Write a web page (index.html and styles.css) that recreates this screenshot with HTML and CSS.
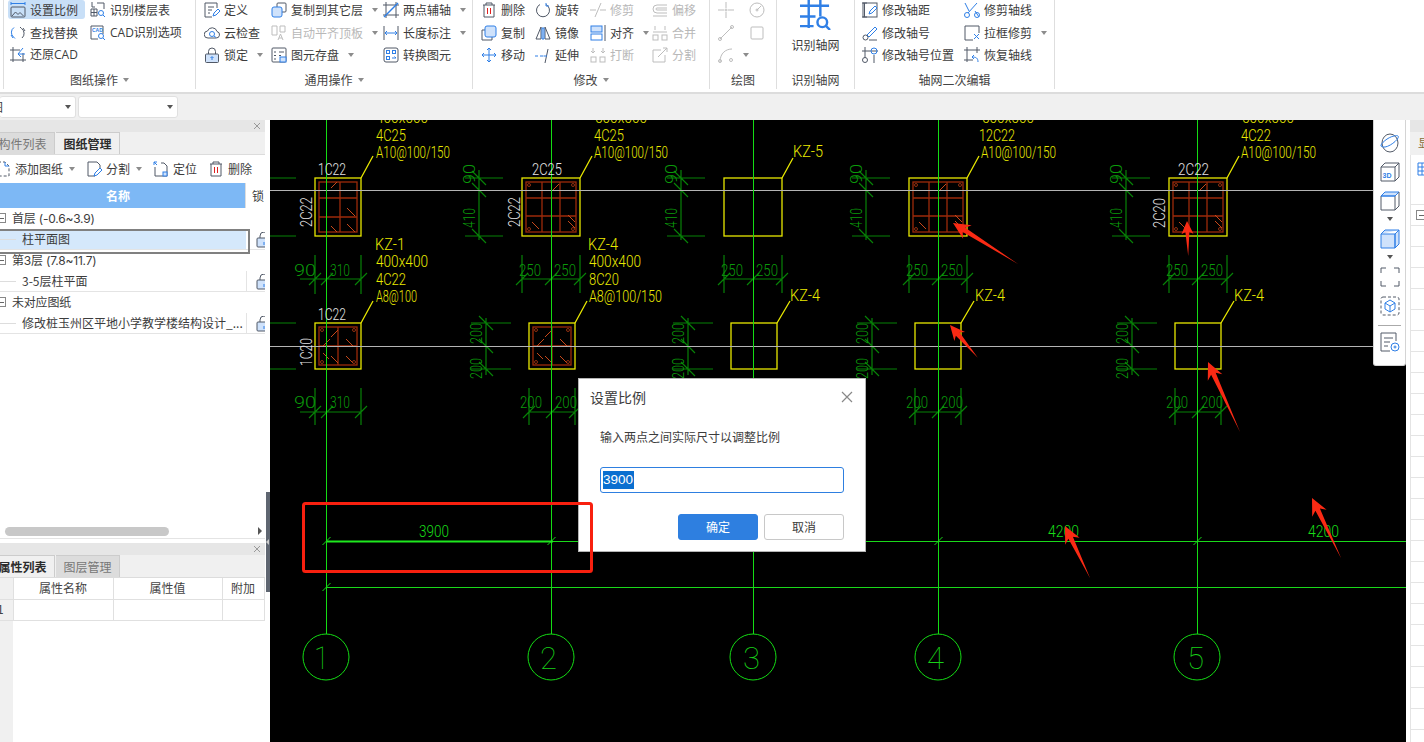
FILE: index.html
```html
<!DOCTYPE html>
<html lang="zh">
<head>
<meta charset="utf-8">
<title>设置比例</title>
<link rel="stylesheet" href="styles.css">
</head>
<body>
<header class="ribbon">
  <section class="group g1">
    <div class="tools">
      <div class="tool sel"><svg class="ic" viewBox="0 0 16 16"><path class="bl" d="M1 0v3M15 0v3M1 1.500h14"/><rect x="1" y="5" width="14" height="10" rx="1"/><path d="M2 14l3.500-4 2.500 2.500 2-2 3.500 3.500"/></svg><span>设置比例</span></div>
      <div class="tool"><svg class="ic" viewBox="0 0 16 16"><path class="bl" d="M4 2.500A6 6 0 0 0 3.500 12l1.500 1.500M1 10l2 3"/><path d="M10 2l1.500 1.500A6 6 0 0 1 12 13M15 6l-2-3"/></svg><span>查找替换</span></div>
      <div class="tool"><svg class="ic" viewBox="0 0 16 16"><path d="M3 0v15M0 3h10M13 6v9M0 13h16"/><path class="bl" d="M13 1L8 7h7M8 7l3 3"/></svg><span class="lat">还原CAD</span></div>
      <div class="tool"><svg class="ic" viewBox="0 0 16 16"><path d="M2 0v5h3M1 7h6v7H1zM1 10.500h6M4 7v7M7 1h7v6"/><circle class="bl" cx="11" cy="11" r="2.500"/><path class="bl" d="M13 13l2 2"/></svg><span>识别楼层表</span></div>
      <div class="tool"><svg class="ic" viewBox="0 0 16 16"><path d="M13 9V1H1v13h7"/><text class="mini" x="2" y="7">CAD</text><circle class="bl" cx="11" cy="11" r="2.500"/><path class="bl" d="M13 13l2 2"/></svg><span class="lat">CAD识别选项</span></div>
    </div>
    <div class="glabel">图纸操作<i class="caret"></i></div>
  </section>
  <section class="group g2">
    <div class="tools">
      <div class="tool"><svg class="ic" viewBox="0 0 16 16"><path d="M13 6V1H1v14h7M4 5h6M4 8h4M4 11h2"/><path class="bl" d="M9 14l1-3 4-4 2 2-4 4z"/></svg><span>定义</span></div>
      <div class="tool"><svg class="ic" viewBox="0 0 16 16"><path d="M4 13a3.500 3.500 0 0 1-.5-7A5 5 0 0 1 13 6.500 3.300 3.300 0 0 1 12 13z"/><circle class="bl" cx="8" cy="9" r="2.500"/><path class="bl" d="M10 11l2 1.500"/></svg><span>云检查</span></div>
      <div class="tool"><svg class="ic" viewBox="0 0 16 16"><rect class="lt" x="1.500" y="7" width="13" height="8.500" rx="1"/><path d="M4.500 7V4.500a3.500 3.500 0 0 1 7 0V7"/><path class="bl" d="M8 13V10M6.500 11L8 9.500 9.500 11"/></svg><span>锁定</span><i class="caret"></i></div>
      <div class="tool"><svg class="ic" viewBox="0 0 16 16"><rect x="6" y="1" width="9" height="9" rx="1"/><rect class="lt bl" x="1" y="5" width="10" height="10" rx="2"/></svg><span>复制到其它层</span><i class="caret"></i></div>
      <div class="tool off"><svg class="ic" viewBox="0 0 16 16"><path d="M1 1h5v9H1zM9 1h5v6H9zM7 15l2.500-6 2.500 6M8 13h3"/></svg><span>自动平齐顶板</span><i class="caret"></i></div>
      <div class="tool"><svg class="ic" viewBox="0 0 16 16"><rect x="1" y="1" width="14" height="14" rx="1"/><path d="M3 5h2M8 5h5M8 8.500h2M3 8.500h2M3 12h2"/><rect class="lt bl" x="9" y="10" width="6" height="5"/></svg><span>图元存盘</span><i class="caret"></i></div>
      <div class="tool"><svg class="ic" viewBox="0 0 16 16"><path d="M3 0v16M0 13h16M13 0v16M0 3h16"/><path class="bl thick" d="M1 15L15 1"/></svg><span>两点辅轴</span><i class="caret"></i></div>
      <div class="tool"><svg class="ic" viewBox="0 0 16 16"><path d="M1 1v14M15 1v14"/><path class="bl" d="M2 8h12M4 6L2 8l2 2M12 6l2 2-2 2"/></svg><span>长度标注</span><i class="caret"></i></div>
      <div class="tool"><svg class="ic" viewBox="0 0 16 16"><rect x="1" y="1" width="14" height="14" rx="2"/><rect class="bl" x="3.500" y="3.500" width="3" height="3"/><rect class="bl" x="9.500" y="3.500" width="3" height="3"/><rect class="bl" x="3.500" y="9.500" width="3" height="3"/><path class="bl" d="M9 11h4l-1.500-1.500"/></svg><span>转换图元</span></div>
    </div>
    <div class="glabel">通用操作<i class="caret"></i></div>
  </section>
  <section class="group g3">
    <div class="tools">
      <div class="tool"><svg class="ic" viewBox="0 0 16 16"><path d="M2 3h12M5 3V1h6v2M3 3v12h10V3"/><path class="rd" d="M6.500 6v6M9.500 6v6"/></svg><span>删除</span></div>
      <div class="tool"><svg class="ic" viewBox="0 0 16 16"><path d="M4 5H1v10h10v-3"/><rect class="lt bl" x="4" y="1" width="11" height="11" rx="2"/></svg><span>复制</span></div>
      <div class="tool"><svg class="ic" viewBox="0 0 16 16"><path class="bl" d="M8 1v14M1 8h14M6 3l2-2 2 2M6 13l2 2 2-2M3 6L1 8l2 2M13 6l2 2-2 2"/></svg><span>移动</span></div>
      <div class="tool"><svg class="ic" viewBox="0 0 16 16"><path d="M5 2.500a6.500 6.500 0 1 0 6 0"/><path class="bl" d="M11 1v3h3"/></svg><span>旋转</span></div>
      <div class="tool"><svg class="ic" viewBox="0 0 16 16"><path d="M6 2L1 14h5zM10 2l5 12h-5z"/><path class="lt bl" d="M7 3v11h2V3z"/></svg><span>镜像</span></div>
      <div class="tool"><svg class="ic" viewBox="0 0 16 16"><path class="bl" d="M0 9h3M5 9h3"/><path d="M13 2l-3 14"/><path class="bl" d="M8.500 9H12"/></svg><span>延伸</span></div>
      <div class="tool off"><svg class="ic" viewBox="0 0 16 16"><path d="M0 8h6M10 8h6M11 1L5 15"/></svg><span>修剪</span></div>
      <div class="tool"><svg class="ic" viewBox="0 0 16 16"><rect class="lt bl" x="1" y="1" width="11" height="6"/><rect class="bl" x="1" y="9" width="11" height="6"/><path d="M15 0v16"/></svg><span>对齐</span><i class="caret"></i></div>
      <div class="tool off"><svg class="ic" viewBox="0 0 16 16"><rect x="1" y="10" width="5" height="5"/><rect x="10" y="10" width="5" height="5"/><path d="M3 1v5M1 4l2 2 2-2M13 1v5M11 4l2 2 2-2"/></svg><span>打断</span></div>
      <div class="tool off"><svg class="ic" viewBox="0 0 16 16"><path d="M15 3H5a4 4 0 0 0 0 8h10M15 6H5a1 1 0 0 0 0 2h10M1 14h14"/></svg><span>偏移</span></div>
      <div class="tool off"><svg class="ic" viewBox="0 0 16 16"><rect x="1" y="10" width="5" height="5"/><rect x="10" y="10" width="5" height="5"/><path d="M3 1v4M13 1v4M1 7h14"/></svg><span>合并</span></div>
      <div class="tool off"><svg class="ic" viewBox="0 0 16 16"><path d="M9 3H1v12h12V8M6 10l9-9M11 1h4v4"/></svg><span>分割</span></div>
    </div>
    <div class="glabel">修改<i class="caret"></i></div>
  </section>
  <section class="group g4">
    <div class="tools">
      <div class="tool off"><svg class="ic" viewBox="0 0 16 16"><path d="M8 0v6M8 10v6M0 8h6M10 8h6"/><circle cx="8" cy="8" r="1"/></svg></div>
      <div class="tool off"><svg class="ic" viewBox="0 0 16 16"><path d="M2 14L14 2"/><circle cx="2" cy="14" r="1.500"/><circle cx="14" cy="2" r="1.500"/></svg></div>
      <div class="tool off"><svg class="ic" viewBox="0 0 16 16"><path d="M2 15C2 6 8 2 14 2"/><circle cx="2" cy="14" r="1.500"/><circle cx="13" cy="13" r="1.500"/></svg><i class="caret"></i></div>
      <div class="tool off"><svg class="ic" viewBox="0 0 16 16"><circle cx="8" cy="8" r="7"/><circle cx="8" cy="8" r="1"/><path d="M8 8l4-4"/></svg></div>
      <div class="tool off"><svg class="ic" viewBox="0 0 16 16"><rect x="2" y="2" width="12" height="12" rx="1"/></svg></div>
    </div>
    <div class="glabel">绘图</div>
  </section>
  <section class="group g5">
    <div class="big">
      <svg class="bigic" viewBox="0 0 32 32"><path d="M9 0v30M21 0v18M0 7h30M0 18h16M0 28h14"/><circle cx="23" cy="24" r="5"/><path d="M27 28l4 4"/></svg>
      <span>识别轴网</span>
    </div>
    <div class="glabel">识别轴网</div>
  </section>
  <section class="group g6">
    <div class="tools">
      <div class="tool"><svg class="ic" viewBox="0 0 16 16"><path d="M0 1h5M0 15h5M2.500 1v14"/><rect x="1" y="1" width="14" height="14"/><path class="bl" d="M7 12l1-3 5-5 2 2-5 5z"/></svg><span>修改轴距</span></div>
      <div class="tool"><svg class="ic" viewBox="0 0 16 16"><path class="bl" d="M5 10l8-8 2 2-8 8z"/><circle cx="3.500" cy="12.500" r="2.500"/><path d="M7 15h8"/></svg><span>修改轴号</span></div>
      <div class="tool"><svg class="ic" viewBox="0 0 16 16"><path d="M3 0v11M0 4h16M12 8v8"/><circle cx="3" cy="13" r="2.500"/><circle class="bl" cx="12" cy="4" r="3"/></svg><span>修改轴号位置</span></div>
      <div class="tool"><svg class="ic" viewBox="0 0 16 16"><path class="bl" d="M11 9l4 6M5 9L1 1M13 1L4 11"/><circle class="bl" cx="3" cy="13" r="2.500"/><circle class="bl" cx="13" cy="13" r="2.500"/></svg><span>修剪轴线</span></div>
      <div class="tool"><svg class="ic" viewBox="0 0 16 16"><path d="M15 8V1H1v14h8"/><path class="bl" d="M10 9l5 5M15 9l-5 5"/></svg><span>拉框修剪</span><i class="caret"></i></div>
      <div class="tool"><svg class="ic" viewBox="0 0 16 16"><path d="M3 0v15M0 3h16M13 0v6M0 13h9"/><path class="bl" d="M10 8l-2 2 2 2M8 10c4 0 6 1 6 5"/></svg><span>恢复轴线</span></div>
    </div>
    <div class="glabel">轴网二次编辑</div>
  </section>
</header>

<div class="bar">
  <div class="combo c1"><span>图</span><i class="caret dark"></i></div>
  <div class="combo c2"><i class="caret dark"></i></div>
</div>

<main class="main">
  <aside class="left">
    <div class="pane top">
      <div class="phead"><svg class="x" viewBox="0 0 8 8"><path d="M1 1l6 6M7 1L1 7"/></svg></div>
      <div class="tabs">
        <div class="tab">构件列表</div>
        <div class="tab on">图纸管理</div>
      </div>
      <div class="ptools">
        <div class="pt"><svg class="ic" viewBox="0 0 16 16"><path d="M3 1h7l4 4v10H2V1" stroke-dasharray="3 2"/><path class="bl" d="M10 1v4h4"/></svg><span>添加图纸</span><i class="caret"></i></div>
        <div class="pt"><svg class="ic" viewBox="0 0 16 16"><path d="M9 15H2V1h9l3 3v4"/><path class="bl" d="M8 15l1-3 5-5 2 2-5 5z"/></svg><span>分割</span><i class="caret"></i></div>
        <div class="pt"><svg class="ic" viewBox="0 0 16 16"><path d="M8 2h3l3 3v10H2V6"/><path class="bl" d="M1 1l3 3M1 4V1h3"/><rect class="lt bl" x="10" y="11" width="4" height="4"/></svg><span>定位</span></div>
        <div class="pt"><svg class="ic" viewBox="0 0 16 16"><path d="M2 3h12M5 3V1h6v2M3 3v12h10V3"/><path class="rd" d="M6.500 6v6M9.500 6v6"/></svg><span>删除</span></div>
      </div>
      <div class="thead"><div class="hname">名称</div><div class="hlock">锁</div></div>
      <div class="tree">
        <div class="row parent"><i class="box"></i><span>首层 (-0.6~3.9)</span></div>
        <div class="row child cur"><i class="dash"></i><span class="name">柱平面图</span><div class="lock"><svg class="ic" viewBox="0 0 16 16"><rect class="lt" x="1" y="6" width="14" height="9" rx="1"/><path d="M4 6V4a4 4 0 0 1 8 0v2"/><path class="bl" d="M8 13v-3"/></svg></div></div>
        <div class="row parent"><i class="box"></i><span>第3层 (7.8~11.7)</span></div>
        <div class="row child"><i class="dash"></i><span class="name">3-5层柱平面</span><div class="lock"><svg class="ic" viewBox="0 0 16 16"><rect class="lt" x="1" y="6" width="14" height="9" rx="1"/><path d="M4 6V4a4 4 0 0 1 8 0v2"/><path class="bl" d="M8 13v-3"/></svg></div></div>
        <div class="row parent"><i class="box"></i><span>未对应图纸</span></div>
        <div class="row child"><i class="dash"></i><span class="name">修改桩玉州区平地小学教学楼结构设计_...</span><div class="lock"><svg class="ic" viewBox="0 0 16 16"><rect class="lt" x="1" y="6" width="14" height="9" rx="1"/><path d="M4 6V4a4 4 0 0 1 8 0v2"/><path class="bl" d="M8 13v-3"/></svg></div></div>
      </div>
      <div class="hscroll"><div class="thumb"></div><i class="sarrow"></i></div>
    </div>
    <div class="pane bottom">
      <div class="phead"><svg class="x" viewBox="0 0 8 8"><path d="M1 1l6 6M7 1L1 7"/></svg></div>
      <div class="tabs">
        <div class="tab on">属性列表</div>
        <div class="tab">图层管理</div>
      </div>
      <div class="props">
        <table class="ptable">
          <colgroup><col class="ci"><col class="cn"><col class="cv"><col class="ca"></colgroup>
          <tr><th></th><th>属性名称</th><th>属性值</th><th>附加</th></tr>
          <tr><td class="idx">1</td><td></td><td></td><td></td></tr>
        </table>
      </div>
    </div>
  </aside>
  <div class="split"><div class="handle"><i></i></div></div>

  <div class="stage">
    <svg class="cad" viewBox="270 120 1136 622">
      <defs>
        <g id="col58">
          <rect class="yl" x="0" y="0" width="58" height="58"/>
          <path class="dg" d="M-57 0h38M-57 58h38M-43-8v70M-50-7l14 14M-50 5l14 14M-50 51l14 14"/>
          <path class="dg" d="M0 77v38M58 77v38M0 101h58M-6 107L6 95M23 107l12-12M52 107l12-12"/>
          <text class="tg" x="-47" y="6" transform="rotate(-90 -47 6)" textLength="20" lengthAdjust="spacingAndGlyphs">90</text>
          <text class="tg" x="-47" y="50" transform="rotate(-90 -47 50)" textLength="20" lengthAdjust="spacingAndGlyphs">410</text>
          <text class="tg" x="-3" y="98" textLength="22" lengthAdjust="spacingAndGlyphs">250</text>
          <text class="tg" x="32" y="98" textLength="22" lengthAdjust="spacingAndGlyphs">250</text>
        </g>
        <g id="col46">
          <rect class="yl" x="0" y="0" width="46" height="46"/>
          <path class="dg" d="M-58 0h40M-58 46h40M-43-5v57M-50-7l14 14M-50 16l14 14M-50 39l14 14"/>
          <path class="dg" d="M0 65v37M46 65v37M0 89h46M-6 95L6 83M17 95l12-12M40 95l12-12"/>
          <text class="tg" x="-47" y="21" transform="rotate(-90 -47 21)" textLength="21" lengthAdjust="spacingAndGlyphs">200</text>
          <text class="tg" x="-47" y="56" transform="rotate(-90 -47 56)" textLength="21" lengthAdjust="spacingAndGlyphs">200</text>
          <text class="tg" x="-9" y="85" textLength="22" lengthAdjust="spacingAndGlyphs">200</text>
          <text class="tg" x="26" y="85" textLength="22" lengthAdjust="spacingAndGlyphs">200</text>
        </g>
        <g id="rebar58">
          <rect class="rb" x="4" y="4" width="50" height="50"/>
          <path class="rb" d="M4 20h50M4 38h50M20 4v50M38 4v50"/>
          <path class="rt" d="M30 13l7-7M46 37l7 7M46 43l7 7M10 44l7 7"/>
          <circle class="rc" cx="7" cy="7" r="1.500"/><circle class="rc" cx="51" cy="7" r="1.500"/><circle class="rc" cx="7" cy="51" r="1.500"/><circle class="rc" cx="51" cy="51" r="1.500"/>
        </g>
        <g id="rebar46">
          <rect class="rb" x="4" y="4" width="38" height="38"/>
          <path class="rb" d="M4 23h38M23 4v38"/>
          <path class="rt" d="M16 14l7-7M38 23l-7-7M8 23l7-7M16 33l7 7M31 33l7 7M8 30l6 6"/>
          <circle class="rc" cx="7" cy="7" r="1.500"/><circle class="rc" cx="39" cy="7" r="1.500"/><circle class="rc" cx="7" cy="39" r="1.500"/><circle class="rc" cx="39" cy="39" r="1.500"/>
        </g>
      </defs>

      <use href="#col58" x="522" y="178"/>
      <use href="#col58" x="724" y="178"/>
      <use href="#col58" x="909" y="178"/>
      <use href="#col58" x="1169" y="178"/>
      <use href="#col46" x="529" y="323"/>
      <use href="#col46" x="731" y="323"/>
      <use href="#col46" x="915" y="323"/>
      <use href="#col46" x="1175" y="323"/>

      <use href="#rebar58" x="522" y="178"/>
      <use href="#rebar58" x="909" y="178"/>
      <use href="#rebar58" x="1169" y="178"/>
      <use href="#rebar46" x="529" y="323"/>
      <use href="#rebar46" x="315" y="323"/>

      <g>
        <rect class="rb" x="319" y="182" width="38" height="50"/>
        <path class="rb" d="M319 198h38M319 217h38M340 182v50"/>
        <path class="rt" d="M331 188l6-6M347 208l8 8M347 224l8 8M331 226l6 6"/>
        <rect class="yl" x="315" y="178" width="46" height="58"/>
        <rect class="yl" x="315" y="323" width="46" height="46"/>
        <path class="dg" d="M270 178h26M270 236h26M270 323h26M270 369h26"/>
        <path class="dg" d="M315 255v39M361 255v39M300 279h61M309 285l12-12M321 285l12-12M355 285l12-12"/>
        <path class="dg" d="M315 388v37M361 388v37M300 412h61M309 418l12-12M321 418l12-12M355 418l12-12"/>
        <text class="tg" x="294" y="276" textLength="22" lengthAdjust="spacingAndGlyphs">90</text>
        <text class="tg" x="330" y="276" textLength="20" lengthAdjust="spacingAndGlyphs">310</text>
        <text class="tg" x="294" y="408" textLength="22" lengthAdjust="spacingAndGlyphs">90</text>
        <text class="tg" x="330" y="408" textLength="20" lengthAdjust="spacingAndGlyphs">310</text>
      </g>

      <path class="gray" d="M270 190.500h1136M270 346.500h1136"/>
      <path class="ax" d="M326.500 120v514M551.500 120v514M753.500 120v514M938.500 120v514M1197.500 120v514"/>
      <path class="ln" d="M553 541.500h853M326 587.500h1080M322.500 545l8-8M322.500 591l8-8M547.500 545l8-8M749.500 545l8-8M934.500 545l8-8M1193.500 545l8-8"/>
      <path class="bright" d="M327 541.500h226"/>
      <g class="ax">
        <circle cx="326" cy="657" r="23"/><circle cx="551" cy="657" r="23"/><circle cx="753" cy="657" r="23"/><circle cx="938" cy="657" r="23"/><circle cx="1197" cy="657" r="23"/>
      </g>
      <text class="tn" x="314" y="669" textLength="15" lengthAdjust="spacingAndGlyphs">1</text>
      <text class="tn" x="540" y="669" textLength="17" lengthAdjust="spacingAndGlyphs">2</text>
      <text class="tn" x="743" y="669" textLength="17" lengthAdjust="spacingAndGlyphs">3</text>
      <text class="tn" x="927" y="669" textLength="17" lengthAdjust="spacingAndGlyphs">4</text>
      <text class="tn" x="1187" y="669" textLength="17" lengthAdjust="spacingAndGlyphs">5</text>
      <text class="tb" x="419" y="537" textLength="30" lengthAdjust="spacingAndGlyphs">3900</text>
      <text class="tb" x="1048" y="537" textLength="31" lengthAdjust="spacingAndGlyphs">4200</text>
      <text class="tb" x="1308" y="537" textLength="31" lengthAdjust="spacingAndGlyphs">4200</text>

      <path class="yl" d="M361 178l12-22M580 178l12-22M782 178l11-20M967 178l12-22M1227 178l12-22M361 323l12-22M575 323l12-22M777 323l13-22M961 323l13-22M1221 323l13-22"/>

      <text class="ty" x="376" y="123" textLength="52" lengthAdjust="spacingAndGlyphs">400x500</text>
      <text class="ty" x="376" y="141" textLength="30" lengthAdjust="spacingAndGlyphs">4C25</text>
      <text class="ty" x="376" y="158" textLength="74" lengthAdjust="spacingAndGlyphs">A10@100/150</text>
      <text class="ty" x="595" y="123" textLength="52" lengthAdjust="spacingAndGlyphs">500x500</text>
      <text class="ty" x="594" y="141" textLength="30" lengthAdjust="spacingAndGlyphs">4C25</text>
      <text class="ty" x="594" y="158" textLength="74" lengthAdjust="spacingAndGlyphs">A10@100/150</text>
      <text class="ty" x="793" y="157" textLength="30" lengthAdjust="spacingAndGlyphs">KZ-5</text>
      <text class="ty" x="982" y="123" textLength="52" lengthAdjust="spacingAndGlyphs">500x500</text>
      <text class="ty" x="979" y="141" textLength="36" lengthAdjust="spacingAndGlyphs">12C22</text>
      <text class="ty" x="981" y="158" textLength="75" lengthAdjust="spacingAndGlyphs">A10@100/150</text>
      <text class="ty" x="1242" y="123" textLength="52" lengthAdjust="spacingAndGlyphs">500x500</text>
      <text class="ty" x="1241" y="141" textLength="30" lengthAdjust="spacingAndGlyphs">4C22</text>
      <text class="ty" x="1241" y="158" textLength="75" lengthAdjust="spacingAndGlyphs">A10@100/150</text>
      <text class="ty" x="375" y="250" textLength="30" lengthAdjust="spacingAndGlyphs">KZ-1</text>
      <text class="ty" x="376" y="267" textLength="52" lengthAdjust="spacingAndGlyphs">400x400</text>
      <text class="ty" x="376" y="285" textLength="30" lengthAdjust="spacingAndGlyphs">4C22</text>
      <text class="ty" x="376" y="302" textLength="41" lengthAdjust="spacingAndGlyphs">A8@100</text>
      <text class="ty" x="588" y="250" textLength="30" lengthAdjust="spacingAndGlyphs">KZ-4</text>
      <text class="ty" x="589" y="267" textLength="52" lengthAdjust="spacingAndGlyphs">400x400</text>
      <text class="ty" x="589" y="285" textLength="30" lengthAdjust="spacingAndGlyphs">8C20</text>
      <text class="ty" x="589" y="302" textLength="73" lengthAdjust="spacingAndGlyphs">A8@100/150</text>
      <text class="ty" x="790" y="301" textLength="30" lengthAdjust="spacingAndGlyphs">KZ-4</text>
      <text class="ty" x="975" y="301" textLength="30" lengthAdjust="spacingAndGlyphs">KZ-4</text>
      <text class="ty" x="1234" y="301" textLength="30" lengthAdjust="spacingAndGlyphs">KZ-4</text>

      <text class="tw" x="318" y="175" textLength="28" lengthAdjust="spacingAndGlyphs">1C22</text>
      <text class="tw" x="532" y="175" textLength="30" lengthAdjust="spacingAndGlyphs">2C25</text>
      <text class="tw" x="1178" y="175" textLength="31" lengthAdjust="spacingAndGlyphs">2C22</text>
      <text class="tw" x="318" y="320" textLength="28" lengthAdjust="spacingAndGlyphs">1C22</text>
      <text class="tw" x="312" y="227" transform="rotate(-90 312 227)" textLength="30" lengthAdjust="spacingAndGlyphs">2C22</text>
      <text class="tw" x="520" y="227" transform="rotate(-90 520 227)" textLength="30" lengthAdjust="spacingAndGlyphs">2C22</text>
      <text class="tw" x="1165" y="228" transform="rotate(-90 1165 228)" textLength="30" lengthAdjust="spacingAndGlyphs">2C20</text>
      <text class="tw" x="312" y="366" transform="rotate(-90 312 366)" textLength="28" lengthAdjust="spacingAndGlyphs">1C20</text>
    </svg>

    <div class="float">
      <svg class="fi" viewBox="0 0 20 20"><ellipse cx="10" cy="10" rx="8" ry="9"/><path class="bl" d="M1 13C0 11 8 4 14 3c4-1 5 0 4 2C16 9 5 17 1 13z"/></svg>
      <svg class="fi" viewBox="0 0 20 20"><path d="M1 5h14v14H1zM1 5l4-4h14v14l-4 4M15 5l4-4"/><text class="mini3d" x="2.500" y="16">3D</text></svg>
      <svg class="fi" viewBox="0 0 20 20"><path class="lt bl" d="M1 5l4-4h14l-4 4z"/><path d="M1 5v14h14V5M15 19l4-4V1"/><path class="bl" d="M1 5h14"/></svg>
      <i class="fcaret"></i>
      <svg class="fi" viewBox="0 0 20 20"><path class="lt bl" d="M1 5h14v14H1zM1 5l4-4h14v14l-4 4V5l4-4"/></svg>
      <i class="fcaret"></i>
      <svg class="fi" viewBox="0 0 20 20"><path d="M1 6V1h5M14 1h5v5M19 14v5h-5M6 19H1v-5"/></svg>
      <svg class="fi" viewBox="0 0 20 20"><rect x="1" y="1" width="18" height="18" rx="2" stroke-dasharray="3 2"/><path class="bl" d="M10 4l5 3v6l-5 3-5-3V7zM5 7l5 3 5-3M10 10v6"/></svg>
      <hr class="fsep">
      <svg class="fi" viewBox="0 0 20 20"><path d="M16 9V1H1v18h9M4 6h9M4 10h6M4 14h4"/><circle class="bl" cx="15" cy="15" r="4"/><circle class="bl" cx="15" cy="15" r="1"/></svg>
    </div>

    <div class="dialog">
      <div class="dtitle"><span>设置比例</span><svg class="dx" viewBox="0 0 12 12"><path d="M1 1l10 10M11 1L1 11"/></svg></div>
      <p class="dmsg">输入两点之间实际尺寸以调整比例</p>
      <div class="dinput"><span class="selected">3900</span></div>
      <div class="dbtns"><div class="btn ok">确定</div><div class="btn">取消</div></div>
    </div>

    <svg class="marks" viewBox="270 120 1136 622">
      <rect class="mbox" x="303.500" y="503.500" width="288" height="68" rx="2"/>
      <g class="arrows">
        <polygon transform="translate(953 223) rotate(-57.800)" points="0,0 8,17 2.500,13 0,77 -2.500,13 -8,17"/>
        <polygon transform="translate(1187 221) rotate(-2)" points="0,0 6,13 2,11 0,35 -2,11 -6,13"/>
        <polygon transform="translate(950 325) rotate(-40.300)" points="0,0 7,15 2.500,12 0,43 -2.500,12 -7,15"/>
        <polygon transform="translate(1208 362) rotate(-24.600)" points="0,0 8,17 2.500,13 0,77 -2.500,13 -8,17"/>
        <polygon transform="translate(1312 498) rotate(-25.800)" points="0,0 8,17 2.500,13 0,67 -2.500,13 -8,17"/>
        <polygon transform="translate(1065 526) rotate(-25.700)" points="0,0 8,17 2.500,13 0,58 -2.500,13 -8,17"/>
      </g>
    </svg>
  </div>

  <aside class="right">
    <div class="rhead"></div>
    <div class="rtabs"><span>显</span></div>
    <div class="rbody">
      <div class="rtab"><svg class="ri" viewBox="0 0 10 16"><path d="M1 2h12v12H1zM1 6h12M1 10h12M5 2v12"/></svg></div>
      <div class="rgrid"><i class="box wide-box"></i></div>
    </div>
  </aside>
</main>
</body>
</html>
```
FILE: styles.css
```css
* { box-sizing: border-box; }
html, body { margin: 0; padding: 0; height: 100%; }
body {
  width: 1424px;
  height: 742px;
  overflow: hidden;
  display: flex;
  flex-direction: column;
  background: #f0f0f0;
  font: 12px/1.2 "Noto Sans CJK SC", "Noto Sans", sans-serif;
  color: #3c3c3c;
}

/* ribbon */
.ribbon {
  height: 94px;
  flex: none;
  display: flex;
  padding-left: 3px;
  background: #fff;
  border-bottom: 2px solid #dcdcdc;
  align-items: flex-start;
  overflow: hidden;
}
.group {
  height: 89px;
  flex: none;
  display: flex;
  flex-direction: column;
  border-right: 1px solid #dedede;
  position: relative;
}
.g1 { width: 193px; border-left: 1px solid #dedede; }
.g2 { width: 277px; }
.g3 { width: 237px; }
.g4 { width: 67px; }
.g5 { width: 78px; }
.g6 { width: 200px; }
.tools {
  flex: 1;
  min-height: 0;
  display: grid;
  grid-auto-flow: column;
  grid-template-rows: repeat(3, 22.500px);
  margin-top: -1px;
  align-content: start;
}
.g1 .tools { grid-template-columns: 80px 90px; padding-left: 6px; }
.g2 .tools { grid-template-columns: 67px 112px 80px; padding-left: 8px; }
.g3 .tools { grid-template-columns: 54px 55px 62px 50px; padding-left: 8px; }
.g4 .tools { grid-template-columns: 31px 20px; padding-left: 8px; }
.g6 .tools { grid-template-columns: 102px 90px; padding-left: 7px; }
.tool {
  display: flex;
  align-items: center;
  gap: 4px;
  height: 22.500px;
  white-space: nowrap;
}
.tool.sel { position: relative; }
.tool.sel::before {
  content: "";
  position: absolute;
  left: -2px;
  top: 1px;
  width: 77px;
  height: 19px;
  background: #c8dff7;
  border-radius: 3px;
}
.tool.sel > * { position: relative; }
.tool.off { color: #b8b8b8; }
.tool.off .ic, .tool.off .ic * { stroke: #bdbdbd; }
.lat { font-family: "Open Sans", "Noto Sans CJK SC", sans-serif; }
.ic {
  width: 16px;
  height: 16px;
  flex: none;
  fill: none;
  stroke: #505866;
  stroke-width: 1;
}
.bl { stroke: #2f7fe6; }
.lt { fill: #cfe2fb; }
.rd { stroke: #e02020; }
.thick { stroke-width: 1.500; }
.mini { font: 700 5px "Liberation Sans", sans-serif; fill: #2f7fe6; stroke: none; }
.caret {
  display: inline-block;
  width: 0;
  height: 0;
  margin-left: 5px;
  border-left: 3.500px solid transparent;
  border-right: 3.500px solid transparent;
  border-top: 4px solid #8c8c8c;
  flex: none;
}
.caret.dark { border-top-color: #555; }
.glabel {
  height: 22px;
  margin-bottom: -2px;
  flex: none;
  display: flex;
  align-items: center;
  justify-content: center;
  color: #444;
}
.big {
  flex: 1;
  min-height: 0;
  display: flex;
  flex-direction: column;
  align-items: center;
  gap: 8px;
}
.big span { line-height: 14px; }
.bigic {
  width: 31px;
  height: 31px;
  margin-top: -1px;
  flex: none;
  fill: none;
  stroke: #2f7fe6;
  stroke-width: 2.500;
}

/* second bar */
.bar {
  height: 26px;
  flex: none;
  display: flex;
  align-items: center;
  gap: 2px;
  background: #f0f0f0;
}
.combo {
  height: 22px;
  background: #fff;
  border: 1px solid #e0e0e0;
  border-radius: 3px;
  display: flex;
  align-items: center;
  justify-content: space-between;
  padding-right: 4px;
  overflow: hidden;
}
.c1 { width: 76px; border-left: 0; }
.c1 span { margin-left: -9px; }
.c2 { width: 100px; justify-content: flex-end; }

/* main */
.main { flex: 1; min-height: 0; display: flex; }
.left {
  width: 265px;
  flex: none;
  display: flex;
  flex-direction: column;
  background: #fff;
  overflow: hidden;
}
.pane { display: flex; flex-direction: column; }
.pane.top { height: 423px; flex: none; padding-bottom: 4px; }
.pane.bottom { flex: 1; min-height: 0; }
.phead {
  height: 12px;
  flex: none;
  background: #e6e6e6;
  display: flex;
  justify-content: flex-end;
  align-items: center;
  padding-right: 4px;
}
.x { width: 8px; height: 8px; fill: none; stroke: #999; stroke-width: 1; }
.tabs {
  height: 23px;
  flex: none;
  display: flex;
  gap: 1px;
  margin-left: -9px;
  background: #f0f0f0;
  border-bottom: 1px solid #dcdcdc;
}
.tab {
  width: 64px;
  text-align: center;
  line-height: 22px;
  background: #dcdcdc;
  color: #777;
  border-top: 1px solid #ccc;
  border-right: 1px solid #ccc;
}
.tab.on { background: #f0f0f0; color: #2c2c2c; font-weight: 700; }
.ptools {
  height: 28px;
  flex: none;
  display: flex;
  align-items: center;
  gap: 11px;
  margin-left: -5px;
  white-space: nowrap;
}
.pt { display: flex; align-items: center; gap: 4px; }
.pt .caret { margin-left: 2px; }
.thead { height: 25px; flex: none; display: flex; }
.hname {
  width: 246px;
  flex: none;
  background: #7db8f5;
  color: #fff;
  font-weight: 700;
  text-align: center;
  line-height: 25px;
  border-right: 1px solid #ddd;
  text-indent: -9px;
}
.hlock { flex: 1; line-height: 25px; padding-left: 6px; overflow: hidden; white-space: nowrap; }
.tree { flex: 1; min-height: 0; }
.row {
  height: 21px;
  display: flex;
  align-items: center;
  border-bottom: 1px solid #e4e4e4;
  white-space: nowrap;
}
.parent { border-bottom-color: transparent; }
.parent span { font-family: "Inter", "Noto Sans CJK SC", sans-serif; letter-spacing: -.2px; padding-top: 2px; }
.box {
  width: 10px;
  height: 10px;
  margin-left: -4px;
  margin-right: 6px;
  border: 1px solid #888;
  background: linear-gradient(#666, #666) center / 6px 1px no-repeat #fff;
  flex: none;
}
.dash { width: 16px; height: 1px; background: #ddd; flex: none; margin-right: 6px; }
.name { width: 224px; flex: none; overflow: hidden; padding-top: 1px; }
.lock {
  width: 19px;
  flex: none;
  height: 21px;
  border-left: 1px solid #e4e4e4;
  padding: 3px 0 0 9px;
  overflow: hidden;
}
.cur {
  position: relative;
  background: linear-gradient(90deg, #d5e8fb 246px, #fff 246px);
}
.cur::after {
  content: "";
  position: absolute;
  left: -3px;
  top: 0;
  width: 249px;
  height: 21px;
  border: 2px solid #808080;
}
.cur .lock { border-left-color: transparent; }
.hscroll {
  height: 15px;
  flex: none;
  display: flex;
  align-items: center;
  justify-content: space-between;
  padding: 0 3px 0 5px;
  border-bottom: 1px solid #e4e4e4;
}
.thumb { width: 164px; height: 9px; border-radius: 5px; background: #c8c8c8; }
.sarrow {
  width: 0;
  height: 0;
  border-top: 4px solid transparent;
  border-bottom: 4px solid transparent;
  border-left: 4px solid #555;
}
.props {
  flex: 1;
  min-height: 0;
  background: linear-gradient(90deg, #f0f0f0 13px, #fff 13px);
}
.ptable {
  width: 264px;
  table-layout: fixed;
  border-collapse: collapse;
  background: #fff;
}
.ci { width: 13px; }
.cn { width: 100px; }
.cv { width: 109px; }
.ca { width: 42px; }
.ptable th, .ptable td {
  height: 21px;
  padding: 0;
  border: 1px solid #e0e0e0;
  font-weight: 400;
  text-align: center;
  color: #444;
}
.ptable tr:first-child th { border-top: 0; }
.ptable th:first-child, .ptable .idx {
  background: #f0f0f0;
  border-left: 0;
  text-align: left;
  text-indent: -3px;
}
.split { width: 5px; flex: none; background: #fff; }
.handle {
  margin: 372px 0 0 1px;
  width: 4px;
  height: 100px;
  background: #5f6671;
  display: flex;
  align-items: center;
  overflow: hidden;
}
.handle i {
  width: 0;
  height: 0;
  border-top: 3px solid transparent;
  border-bottom: 3px solid transparent;
  border-right: 3px solid #ccc;
}

/* drawing */
.stage { flex: 1; min-width: 0; position: relative; background: #000; overflow: hidden; }
.cad { display: block; width: 1136px; height: 622px; }
.yl { fill: none; stroke: #e8e800; stroke-width: 1.300; }
.dg { fill: none; stroke: #078207; stroke-width: 1.200; }
.gray { fill: none; stroke: #b4b4b4; stroke-width: 1; }
.ax { fill: none; stroke: #14dc14; stroke-width: 1; }
.ln { fill: none; stroke: #1ad81a; stroke-width: 1; }
.bright { fill: none; stroke: #1ee81e; stroke-width: 1.800; }
.rb { fill: none; stroke: #9c2a0a; stroke-width: 1.300; }
.rt { fill: none; stroke: #c8481a; stroke-width: 1; }
.rc { fill: none; stroke: #b03a14; stroke-width: .8; }
.cad text { font-family: "Roboto", "Liberation Sans", sans-serif; font-weight: 300; font-size: 17px; }
.cad .tg { fill: #0b9a0b; }
.cad .ty { fill: #eaea00; }
.cad .tw { fill: #e4e4e4; }
.cad .tb { fill: #18dc18; }
.cad .tn { fill: #18d018; font-size: 31px; font-weight: 100; }
.marks { position: absolute; left: 0; top: 0; width: 1136px; height: 622px; pointer-events: none; }
.mbox { fill: none; stroke: #f8200f; stroke-width: 3; }
.arrows { fill: #fa2a14; }

.float {
  position: absolute;
  left: 1103px;
  top: 0;
  width: 33px;
  height: 246px;
  background: #fff;
  border: 1px solid #d4d4d4;
  border-top: 0;
  border-radius: 0 0 3px 3px;
  display: flex;
  flex-direction: column;
  align-items: center;
  padding-top: 13px;
}
.fi {
  width: 20px;
  height: 20px;
  flex: none;
  margin-bottom: 9px;
  fill: none;
  stroke: #525a68;
  stroke-width: 1;
}
.mini3d { font: 700 7px "Liberation Sans", sans-serif; fill: #2f7fe6; stroke: none; }
.fcaret {
  width: 0;
  height: 0;
  flex: none;
  margin: -3px 0 8px;
  border-left: 3.500px solid transparent;
  border-right: 3.500px solid transparent;
  border-top: 4px solid #555;
}
.fsep { width: 23px; height: 1px; margin: 0 0 6px; border: 0; background: #aaa; flex: none; }

.dialog {
  position: absolute;
  left: 308px;
  top: 258px;
  width: 288px;
  height: 174px;
  background: #fff;
  border: 1px solid #b4b4b4;
  display: flex;
  flex-direction: column;
}
.dtitle {
  display: flex;
  align-items: center;
  justify-content: space-between;
  padding: 8px 12px 0 11px;
  font-size: 14px;
  line-height: 20px;
}
.dx { width: 12px; height: 12px; fill: none; stroke: #888; stroke-width: 1.200; }
.dmsg { margin: 22px 0 0 21px; line-height: 16px; }
.dinput {
  margin: 22px 21px 0;
  height: 26px;
  border: 1px solid #2e7fe0;
  border-radius: 3px;
  display: flex;
  align-items: center;
  padding-left: 2px;
  font: 13.500px "Liberation Sans", sans-serif;
}
.selected { background: #0a6fd0; color: #fff; line-height: 18px; padding: 0 1px 0 0; }
.dbtns { display: flex; justify-content: flex-end; gap: 6px; margin: 21px 21px 0 0; }
.btn {
  width: 80px;
  height: 26px;
  line-height: 24px;
  text-align: center;
  border: 1px solid #c8c8c8;
  border-radius: 3px;
  background: #fff;
}
.btn.ok { background: #2e7fe0; border-color: #2e7fe0; color: #fff; }

/* right sliver */
.right {
  width: 18px;
  flex: none;
  background: #fff;
  padding-left: 4px;
  display: flex;
  flex-direction: column;
  overflow: hidden;
}
.rhead { height: 12px; background: #e6e6e6; flex: none; }
.rtabs { height: 23px; background: #f0f0f0; flex: none; padding-left: 8px; color: #8a6d3b; white-space: nowrap; line-height: 22px; overflow: hidden; }
.rbody { flex: 1; min-height: 0; border-left: 1px solid #e4e4e4; overflow: hidden; }
.rtab { height: 50px; padding: 6px 0 0 6px; border-bottom: 1px solid #e4e4e4; }
.ri { width: 10px; height: 16px; fill: none; stroke: #2f7fe6; stroke-width: 1; }
.rgrid {
  height: 540px;
  padding: 5px 0 0 5px;
  background: repeating-linear-gradient(#fff 0 20px, #e4e4e4 20px 21px);
}
.wide-box { display: block; margin: 0; width: 12px; }
```
